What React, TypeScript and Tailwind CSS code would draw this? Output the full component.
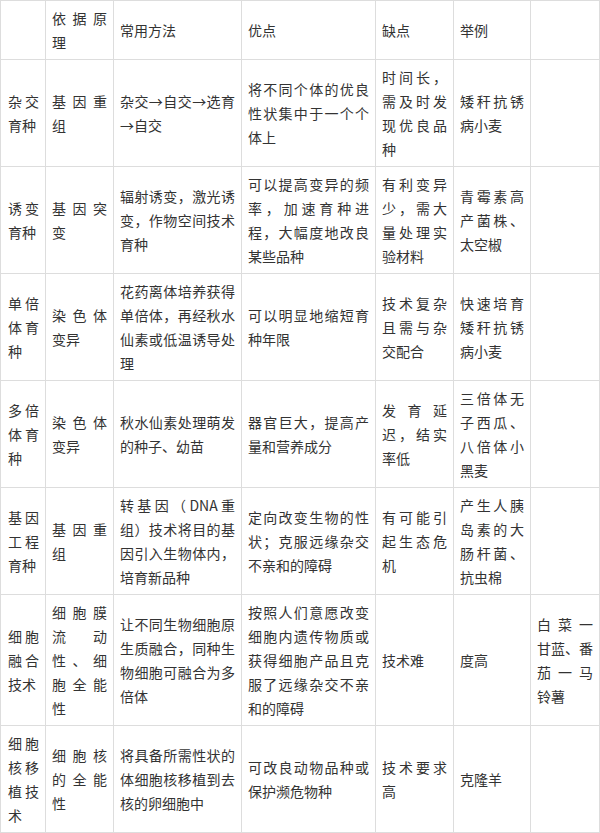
import React from "react";

type Cell = React.ReactNode;

const rows: Cell[][] = [
  [
    "",
    <>
      <span className="block [text-align-last:justify]">依据原</span>
      <span className="block">理</span>
    </>,
    "常用方法",
    "优点",
    "缺点",
    "举例",
    "",
  ],
  [
    "杂交育种",
    "基因重组",
    "杂交→自交→选育→自交",
    "将不同个体的优良性状集中于一个个体上",
    "时间长，需及时发现优良品种",
    "矮秆抗锈病小麦",
    "",
  ],
  [
    "诱变育种",
    "基因突变",
    "辐射诱变，激光诱变，作物空间技术育种",
    "可以提高变异的频率，加速育种进程，大幅度地改良某些品种",
    "有利变异少，需大量处理实验材料",
    "青霉素高产菌株、太空椒",
    "",
  ],
  [
    "单倍体育种",
    "染色体变异",
    "花药离体培养获得单倍体，再经秋水仙素或低温诱导处理",
    "可以明显地缩短育种年限",
    "技术复杂且需与杂交配合",
    "快速培育矮秆抗锈病小麦",
    "",
  ],
  [
    "多倍体育种",
    "染色体变异",
    "秋水仙素处理萌发的种子、幼苗",
    "器官巨大，提高产量和营养成分",
    "发育延迟，结实率低",
    "三倍体无子西瓜、八倍体小黑麦",
    "",
  ],
  [
    "基因工程育种",
    "基因重组",
    "转基因（DNA重组）技术将目的基因引入生物体内，培育新品种",
    "定向改变生物的性状；克服远缘杂交不亲和的障碍",
    "有可能引起生态危机",
    "产生人胰岛素的大肠杆菌、抗虫棉",
    "",
  ],
  [
    "细胞融合技术",
    "细胞膜流动性、细胞全能性",
    "让不同生物细胞原生质融合，同种生物细胞可融合为多倍体",
    "按照人们意愿改变细胞内遗传物质或获得细胞产品且克服了远缘杂交不亲和的障碍",
    "技术难",
    "度高",
    <>
      <span className="block [text-align-last:justify]">白菜一</span>
      <span className="block">甘蓝、番</span>
      <span className="block [text-align-last:justify]">茄一马</span>
      <span className="block">铃薯</span>
    </>,
  ],
  [
    "细胞核移植技术",
    "细胞核的全能性",
    "将具备所需性状的体细胞核移植到去核的卵细胞中",
    "可改良动物品种或保护濒危物种",
    "技术要求高",
    "克隆羊",
    "",
  ],
];

export default function App() {
  return (
    <div className="w-[600px] h-[833px] bg-white font-['Noto_Sans_CJK_SC',sans-serif] text-[14px] leading-[24px] text-[#333]">
      <div className="grid grid-cols-[46px_68px_128px_134px_78px_77px_69px] border-t border-[#ddd]">
        {rows.map((row, ri) =>
          row.map((cell, ci) => (
            <div
              key={`${ri}-${ci}`}
              className={`flex items-center px-[6px] py-[5px] border-r border-b border-[#ddd] ${
                ci === 0 ? "border-l pl-[7px]" : ""
              }`}
            >
              <div className="w-full text-justify">{cell}</div>
            </div>
          ))
        )}
      </div>
    </div>
  );
}
